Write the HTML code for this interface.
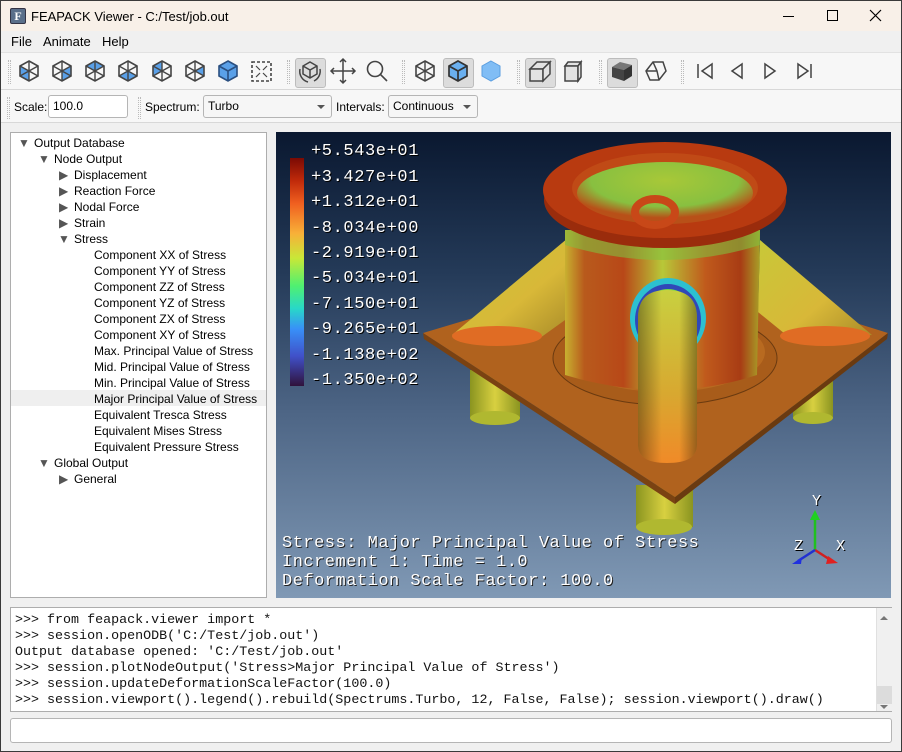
<!DOCTYPE html>
<html><head><meta charset="utf-8">
<style>
*{margin:0;padding:0;box-sizing:border-box}
body{width:902px;height:752px;overflow:hidden;background:#f0f0f0;font-family:"Liberation Sans",sans-serif;font-size:12px;color:#000;position:relative}
.abs{position:absolute}
.win{position:absolute;left:0;top:0;width:902px;height:752px;border:1px solid #3a3a3a}
.title{left:1px;top:1px;width:900px;height:30px;background:#f8f0e8}
.menu{left:1px;top:31px;width:900px;height:21px;background:#f0f0f0;font-size:13px}
.menu span{position:absolute;top:3px}
.tb{left:1px;top:52px;width:900px;height:38px;background:#f7f7f7;border-top:1px solid #e2e2e2;border-bottom:1px solid #d8d8d8}
.tb2{left:1px;top:90px;width:900px;height:33px;background:#f7f7f7;border-bottom:1px solid #d8d8d8}
.grip{position:absolute;width:3px;border-left:1px dotted #bbb;border-right:1px dotted #bbb}
.pressed{position:absolute;background:#dcdcdc;border:1px solid #bcbcbc;border-radius:3px}
.tree{left:10px;top:132px;width:257px;height:466px;background:#fff;border:1px solid #adadad}
.tree div{position:absolute;white-space:nowrap;font-size:12px;height:16px;line-height:16px}
.arr{font-size:8px;color:#555}
.vp{left:276px;top:132px;width:615px;height:466px;background:linear-gradient(#0a1830 0%,#243a58 30%,#4d6585 60%,#8099b5 100%);overflow:hidden}
.mono{font-family:"Liberation Mono",monospace}
.lg{position:absolute;left:35px;color:#fff;font-family:"Liberation Mono",monospace;font-size:17px;text-shadow:1px 1px 0 #000;letter-spacing:0.6px}
.bt{position:absolute;left:6px;color:#fff;font-family:"Liberation Mono",monospace;font-size:17px;text-shadow:1px 1px 0 #222;letter-spacing:0.5px}
.con{left:10px;top:607px;width:882px;height:105px;background:#fff;border:1px solid #adadad}
.con pre{position:absolute;left:4px;top:5px;font-family:"Liberation Mono",monospace;font-size:13.35px;line-height:16px;color:#111}
.inp{left:10px;top:718px;width:882px;height:25px;background:#fff;border:1px solid #b5b5b5;border-radius:3px}
.field{position:absolute;background:#fff;border:1px solid #b5b5b5;border-radius:3px;font-size:12px;padding:3px 4px}
.combo{position:absolute;background:#f6f6f6;border:1px solid #b5b5b5;border-radius:3px;font-size:12px;padding:3px 4px}
.combo:after{content:"";position:absolute;right:6px;top:9px;border-left:4px solid transparent;border-right:4px solid transparent;border-top:4px solid #555}
</style></head><body>
<div class="win"></div>
<div class="abs title">
 <div class="abs" style="left:9px;top:7px;width:16px;height:16px;background:#5a6f8a;border:1px solid #334;border-radius:2px;color:#fff;font:bold 12px 'Liberation Serif',serif;text-align:center;line-height:14px">F</div>
 <div class="abs" style="left:30px;top:8px;font-size:13px">FEAPACK Viewer - C:/Test/job.out</div>
 <div class="abs" style="left:782px;top:15px;width:11px;height:1px;background:#000"></div>
 <div class="abs" style="left:826px;top:9px;width:11px;height:11px;border:1px solid #000"></div>
 <svg class="abs" style="left:868px;top:8px" width="13" height="13"><path d="M1 1L12 12M12 1L1 12" stroke="#000" stroke-width="1.2"/></svg>
</div>
<div class="abs menu"><span style="left:10px">File</span><span style="left:42px">Animate</span><span style="left:101px">Help</span></div>

<div class="abs tb">
<div class="grip" style="left:7px;top:7px;height:24px"></div>
<svg class="abs" style="left:0;top:0" width="900" height="38">
<defs>
<g id="hx"><path d="M0 -10L9 -5L9 5L0 10L-9 5L-9 -5Z" fill="none" stroke="#444" stroke-width="1.6"/><path d="M0 0L0 10M0 0L-9 -5M0 0L9 -5M0 0L-9 5M0 0L9 5M0 0L0 -10" stroke="#444" stroke-width="1.4"/></g>
</defs>
<g transform="translate(28,18)"><path d="M0 0L-9 -5L-9 5L0 10Z" fill="#5aa0e8"/><use href="#hx"/></g>
<g transform="translate(61,18)"><path d="M0 0L9 -5L9 5L0 10Z" fill="#5aa0e8"/><use href="#hx"/></g>
<g transform="translate(94,18)"><path d="M0 0L-9 -5L0 -10L9 -5Z" fill="#5aa0e8"/><use href="#hx"/></g>
<g transform="translate(127,18)"><path d="M0 0L-9 5L0 10L9 5Z" fill="#5aa0e8"/><use href="#hx"/></g>
<g transform="translate(161,18)"><path d="M0 0L-9 -5L-9 5Z" fill="#5aa0e8"/><path d="M0 0L0 -10L-9 -5Z" fill="#5aa0e8"/><use href="#hx"/></g>
<g transform="translate(194,18)"><path d="M0 0L9 -5L9 5Z" fill="#5aa0e8"/><use href="#hx"/></g>
<g transform="translate(227,18)"><path d="M0 -10L9 -5L9 5L0 10L-9 5L-9 -5Z" fill="#5aa0e8"/><path d="M0 -10L9 -5L9 5L0 10L-9 5L-9 -5Z M0 0L0 10M0 0L-9 -5M0 0L9 -5" fill="none" stroke="#2a4f80" stroke-width="1.6"/></g>
<rect x="251" y="9" width="19" height="19" fill="none" stroke="#444" stroke-width="1.6" stroke-dasharray="3 2"/>
<path d="M255 13l4 4M266 13l-4 4M255 24l4-4M266 24l-4-4" stroke="#444" stroke-width="1.2"/>
</svg>
<div class="grip" style="left:286px;top:7px;height:24px"></div>
<div class="pressed" style="left:294px;top:5px;width:31px;height:30px"></div>
<div class="grip" style="left:401px;top:7px;height:24px"></div>
<div class="pressed" style="left:442px;top:5px;width:31px;height:30px"></div>
<div class="grip" style="left:516px;top:7px;height:24px"></div>
<div class="pressed" style="left:524px;top:5px;width:31px;height:30px"></div>
<div class="grip" style="left:598px;top:7px;height:24px"></div>
<div class="pressed" style="left:606px;top:5px;width:31px;height:30px"></div>
<div class="grip" style="left:680px;top:7px;height:24px"></div>
<svg class="abs" style="left:0;top:0" width="900" height="38">
<g transform="translate(309,18)" fill="none" stroke="#444" stroke-width="1.5"><path d="M0 -9L7 -5L7 3L0 7L-7 3L-7 -5Z M0 -1L0 7M0 -1L-7 -5M0 -1L7 -5"/><path d="M-10 -2A11 11 0 0 0 -2 11M10 -2A11 11 0 0 1 4 10"/></g>
<g transform="translate(342,18)" fill="none" stroke="#444" stroke-width="1.5"><path d="M0 -12V12M-12 0H12M-3 -9L0 -12L3 -9M-3 9L0 12L3 9M-9 -3L-12 0L-9 3M9 -3L12 0L9 3"/></g>
<g transform="translate(374,16)" fill="none" stroke="#444" stroke-width="1.6"><circle cx="0" cy="0" r="7.5"/><path d="M5 5L12 12"/></g>
<g transform="translate(424,18)"><use href="#hx"/></g>
<g transform="translate(457,18)"><path d="M0 -10L9 -5L9 5L0 10L-9 5L-9 -5Z" fill="#6ab0f0"/><path d="M0 -10L9 -5L9 5L0 10L-9 5L-9 -5Z M0 0L0 10M0 0L-9 -5M0 0L9 -5" fill="none" stroke="#333" stroke-width="1.7"/></g>
<g transform="translate(490,18)"><path d="M0 -10L9 -5L9 5L0 10L-9 5L-9 -5Z" fill="#80bdf5" stroke="#5a9ee0"/></g>
<g transform="translate(539,18)" fill="#e2e2e2" stroke="#444" stroke-width="1.5"><path d="M-10 -2L-3 -9L10 -9L3 -2Z"/><path d="M-10 -2H3V10H-10Z"/><path d="M3 -2L10 -9V3L3 10Z"/></g>
<g transform="translate(572,18)" fill="#e2e2e2" stroke="#444" stroke-width="1.5"><path d="M-8 -5L-5 -9L8 -9L5 -5Z"/><path d="M-8 -5H5V10H-8Z"/><path d="M5 -5L8 -9V6L5 10Z"/></g>
<g transform="translate(621,18)"><path d="M-10 -4L-2 -9L10 -6L2 -1Z" fill="#777"/><path d="M-10 -4L2 -1L2 10L-10 6Z" fill="#444"/><path d="M2 -1L10 -6L10 5L2 10Z" fill="#333"/></g>
<g transform="translate(655,18)" fill="none" stroke="#444" stroke-width="1.5"><path d="M-10 0L-3 -9L7 -9L10 0L3 9L-6 9Z M-3 -9L1 0L3 9M1 0L-10 0"/></g>
<g fill="none" stroke="#444" stroke-width="1.5"><path d="M697 11V25M711 11L701 18L711 25Z"/><path d="M741 11L731 18L741 25Z"/><path d="M764 11L774 18L764 25Z"/><path d="M797 11L807 18L797 25ZM810 11V25"/></g>
</svg>
</div>

<div class="abs tb2">
<div class="grip" style="left:6px;top:7px;height:22px"></div>
<div class="abs" style="left:13px;top:10px">Scale:</div>
<div class="field" style="left:47px;top:5px;width:80px;height:23px">100.0</div>
<div class="grip" style="left:137px;top:7px;height:22px"></div>
<div class="abs" style="left:144px;top:10px">Spectrum:</div>
<div class="combo" style="left:202px;top:5px;width:129px;height:23px">Turbo</div>
<div class="abs" style="left:335px;top:10px">Intervals:</div>
<div class="combo" style="left:387px;top:5px;width:90px;height:23px">Continuous</div>
</div>

<div class="abs tree">
<div style="left:0;top:257px;width:255px;background:#efefef"></div>
<div class="arr" style="left:7px;top:2px">&#9660;</div><div style="left:23px;top:2px">Output Database</div>
<div class="arr" style="left:27px;top:18px">&#9660;</div><div style="left:43px;top:18px">Node Output</div>
<div class="arr" style="left:48px;top:34px">&#9654;</div><div style="left:63px;top:34px">Displacement</div>
<div class="arr" style="left:48px;top:50px">&#9654;</div><div style="left:63px;top:50px">Reaction Force</div>
<div class="arr" style="left:48px;top:66px">&#9654;</div><div style="left:63px;top:66px">Nodal Force</div>
<div class="arr" style="left:48px;top:82px">&#9654;</div><div style="left:63px;top:82px">Strain</div>
<div class="arr" style="left:47px;top:98px">&#9660;</div><div style="left:63px;top:98px">Stress</div>
<div style="left:83px;top:114px">Component XX of Stress</div>
<div style="left:83px;top:130px">Component YY of Stress</div>
<div style="left:83px;top:146px">Component ZZ of Stress</div>
<div style="left:83px;top:162px">Component YZ of Stress</div>
<div style="left:83px;top:178px">Component ZX of Stress</div>
<div style="left:83px;top:194px">Component XY of Stress</div>
<div style="left:83px;top:210px">Max. Principal Value of Stress</div>
<div style="left:83px;top:226px">Mid. Principal Value of Stress</div>
<div style="left:83px;top:242px">Min. Principal Value of Stress</div>
<div style="left:83px;top:258px">Major Principal Value of Stress</div>
<div style="left:83px;top:274px">Equivalent Tresca Stress</div>
<div style="left:83px;top:290px">Equivalent Mises Stress</div>
<div style="left:83px;top:306px">Equivalent Pressure Stress</div>
<div class="arr" style="left:27px;top:322px">&#9660;</div><div style="left:43px;top:322px">Global Output</div>
<div class="arr" style="left:48px;top:338px">&#9654;</div><div style="left:63px;top:338px">General</div>
</div>

<div class="abs vp">
<svg class="abs" style="left:0;top:0" width="615" height="466">
<defs>
<linearGradient id="cyl" x1="0" x2="1"><stop offset="0" stop-color="#c8b030"/><stop offset="0.1" stop-color="#b85a1c"/><stop offset="0.3" stop-color="#b84818"/><stop offset="0.5" stop-color="#b8c838"/><stop offset="0.72" stop-color="#c05a1c"/><stop offset="0.9" stop-color="#a83c14"/><stop offset="1" stop-color="#a8a028"/></linearGradient>
<linearGradient id="leg" x1="0" x2="1"><stop offset="0" stop-color="#8a9420"/><stop offset="0.5" stop-color="#d8d040"/><stop offset="1" stop-color="#8a9420"/></linearGradient>
<linearGradient id="arm" x1="0" y1="0" x2="1" y2="1"><stop offset="0" stop-color="#c8c838"/><stop offset="0.6" stop-color="#d8b838"/><stop offset="1" stop-color="#a88a28"/></linearGradient>
<linearGradient id="front" x1="0" y1="0" x2="0" y2="1"><stop offset="0" stop-color="#c8d040"/><stop offset="0.6" stop-color="#d8a830"/><stop offset="1" stop-color="#f08a28"/></linearGradient>
<linearGradient id="frontx" x1="0" x2="1"><stop offset="0" stop-color="#000" stop-opacity="0.35"/><stop offset="0.4" stop-color="#000" stop-opacity="0"/><stop offset="0.7" stop-color="#000" stop-opacity="0"/><stop offset="1" stop-color="#000" stop-opacity="0.35"/></linearGradient>
<linearGradient id="turbo" x1="0" y1="0" x2="0" y2="1"><stop offset="0" stop-color="#7a0a04"/><stop offset="0.1" stop-color="#c02a0a"/><stop offset="0.2" stop-color="#f06020"/><stop offset="0.33" stop-color="#f8b038"/><stop offset="0.44" stop-color="#c8e838"/><stop offset="0.56" stop-color="#50f070"/><stop offset="0.66" stop-color="#28d8c8"/><stop offset="0.75" stop-color="#3890f8"/><stop offset="0.87" stop-color="#4050c8"/><stop offset="1" stop-color="#30123b"/></linearGradient>
<radialGradient id="inner" cx="0.5" cy="0.3" r="0.6"><stop offset="0" stop-color="#a8c838"/><stop offset="0.7" stop-color="#88c040"/><stop offset="1" stop-color="#b85018"/></radialGradient>
</defs>
<rect x="14" y="26" width="14" height="228" fill="url(#turbo)"/>
<g transform="translate(-276,-132)">
<!-- legs -->
<rect x="470" y="370" width="50" height="48" fill="url(#leg)"/><ellipse cx="495" cy="418" rx="25" ry="7" fill="#b0b830"/>
<rect x="793" y="370" width="40" height="48" fill="url(#leg)"/><ellipse cx="813" cy="418" rx="20" ry="6" fill="#b0b830"/>
<rect x="636" y="485" width="57" height="42" fill="url(#leg)"/><ellipse cx="664" cy="527" rx="28" ry="8" fill="#b0b830"/>
<!-- plate -->
<path d="M423 333L660 262L888 333L675 497Z" fill="#b0621e"/>
<path d="M423 333L675 497L675 504L424 339Z" fill="#7a4212"/>
<path d="M888 333L675 497L675 504L887 339Z" fill="#6a3a10"/>
<ellipse cx="665" cy="358" rx="112" ry="47" fill="#a85c1a" stroke="#6a3a10" stroke-width="1"/>
<ellipse cx="665" cy="352" rx="100" ry="40" fill="#b86a20"/>
<!-- arms -->
<path d="M452 335L568 238L572 315L540 338Z" fill="url(#arm)"/>
<ellipse cx="497" cy="336" rx="45" ry="10" fill="#e06c24"/>
<path d="M760 240L872 335L790 338L758 312Z" fill="url(#arm)"/>
<ellipse cx="825" cy="336" rx="45" ry="10" fill="#e06c24"/>
<!-- cylinder -->
<path d="M565 230L760 230L757 375Q665 405 565 375Z" fill="url(#cyl)"/>
<path d="M565 230L760 230L760 245Q665 275 565 245Z" fill="#80c040" opacity="0.6"/>
<ellipse cx="668" cy="318" rx="38" ry="40" fill="#2cc0d0"/>
<ellipse cx="668" cy="320" rx="33" ry="36" fill="#3048b8"/>
<ellipse cx="668" cy="322" rx="29" ry="33" fill="#70d848"/>
<!-- front arm -->
<path d="M638 318Q638 290 667 290Q697 290 697 318L697 445Q697 463 667 463Q638 463 638 445Z" fill="url(#front)"/>
<path d="M638 318Q638 290 667 290Q697 290 697 318L697 445Q697 463 667 463Q638 463 638 445Z" fill="url(#frontx)"/>
<!-- flange -->
<ellipse cx="665" cy="200" rx="121" ry="48" fill="#9a2c0c"/>
<ellipse cx="665" cy="190" rx="122" ry="48" fill="#b83a10"/>
<ellipse cx="665" cy="188" rx="93" ry="35" fill="#c04a16"/>
<ellipse cx="665" cy="193" rx="88" ry="31" fill="url(#inner)"/>
<ellipse cx="655" cy="212" rx="20" ry="13" fill="none" stroke="#c84818" stroke-width="8"/>
</g>
<!-- triad -->
<g transform="translate(-276,-132)">
<path d="M815 550V518" stroke="#20c020" stroke-width="2.5"/><path d="M810 520L815 510L820 520Z" fill="#20d020"/>
<path d="M815 550L832 561" stroke="#d02020" stroke-width="2.5"/><path d="M828 556L838 563L826 564Z" fill="#e02020"/>
<path d="M815 550L798 561" stroke="#2030d0" stroke-width="2.5"/><path d="M792 564L802 557L801 564Z" fill="#2030e0"/>
</g>
</svg>
<div class="lg" style="top:10px">+5.543e+01</div>
<div class="lg" style="top:36px">+3.427e+01</div>
<div class="lg" style="top:61px">+1.312e+01</div>
<div class="lg" style="top:87px">-8.034e+00</div>
<div class="lg" style="top:112px">-2.919e+01</div>
<div class="lg" style="top:137px">-5.034e+01</div>
<div class="lg" style="top:163px">-7.150e+01</div>
<div class="lg" style="top:188px">-9.265e+01</div>
<div class="lg" style="top:214px">-1.138e+02</div>
<div class="lg" style="top:239px">-1.350e+02</div>
<div class="bt" style="top:402px">Stress: Major Principal Value of Stress</div>
<div class="bt" style="top:421px">Increment 1: Time = 1.0</div>
<div class="bt" style="top:440px">Deformation Scale Factor: 100.0</div>
<div class="abs mono" style="left:536px;top:361px;color:#fff;font-size:15px;text-shadow:1px 1px 0 #000">Y</div>
<div class="abs mono" style="left:518px;top:406px;color:#fff;font-size:15px;text-shadow:1px 1px 0 #000">Z</div>
<div class="abs mono" style="left:560px;top:406px;color:#fff;font-size:15px;text-shadow:1px 1px 0 #000">X</div>
</div>

<div class="abs con">
<pre>&gt;&gt;&gt; from feapack.viewer import *
&gt;&gt;&gt; session.openODB('C:/Test/job.out')
Output database opened: 'C:/Test/job.out'
&gt;&gt;&gt; session.plotNodeOutput('Stress&gt;Major Principal Value of Stress')
&gt;&gt;&gt; session.updateDeformationScaleFactor(100.0)
&gt;&gt;&gt; session.viewport().legend().rebuild(Spectrums.Turbo, 12, False, False); session.viewport().draw()</pre>
<div class="abs" style="left:865px;top:0;width:16px;height:103px;background:#f0f0f0;border-left:1px solid #e0e0e0"></div>
<div class="abs" style="left:866px;top:78px;width:15px;height:18px;background:#dcdcdc"></div>
<div class="abs" style="left:869px;top:8px;border-left:4px solid transparent;border-right:4px solid transparent;border-bottom:4px solid #777"></div>
<div class="abs" style="left:869px;top:97px;border-left:4px solid transparent;border-right:4px solid transparent;border-top:4px solid #777"></div>
</div>
<div class="abs inp"></div>
</body></html>
